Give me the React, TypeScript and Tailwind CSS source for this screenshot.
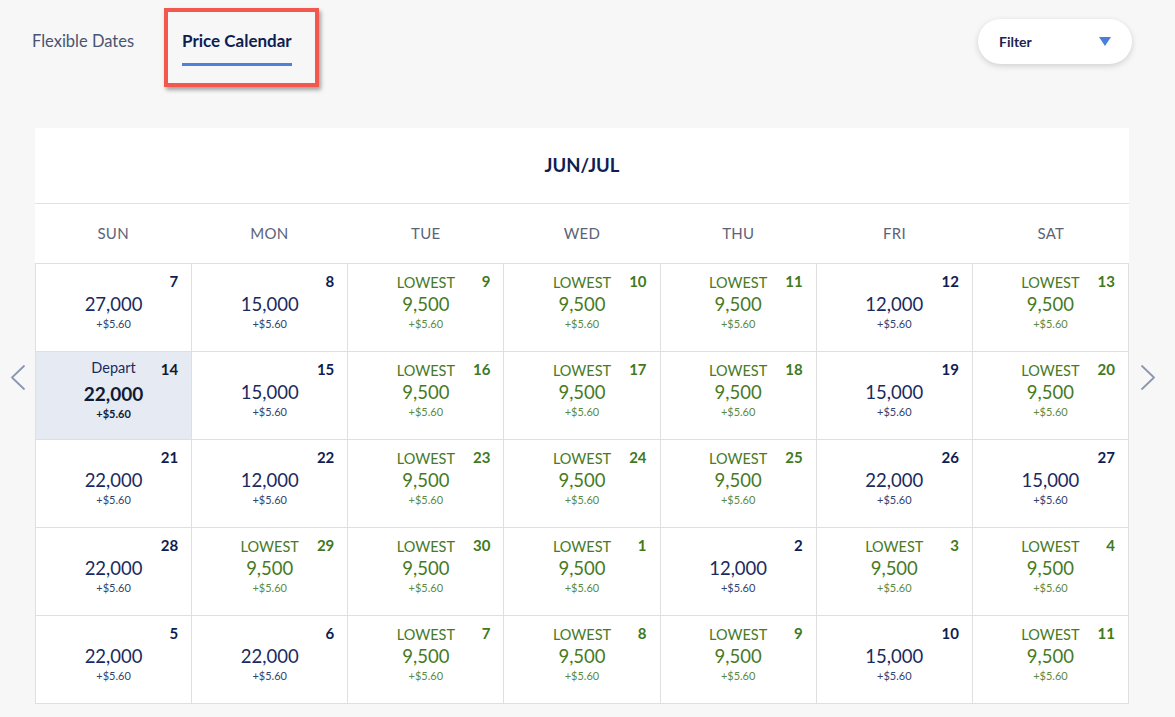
import React from "react";

type Cell = {
  day: number;
  price: string;
  lowest?: boolean;
  depart?: boolean;
};

const rows: Cell[][] = [
  [
    { day: 7, price: "27,000" },
    { day: 8, price: "15,000" },
    { day: 9, price: "9,500", lowest: true },
    { day: 10, price: "9,500", lowest: true },
    { day: 11, price: "9,500", lowest: true },
    { day: 12, price: "12,000" },
    { day: 13, price: "9,500", lowest: true },
  ],
  [
    { day: 14, price: "22,000", depart: true },
    { day: 15, price: "15,000" },
    { day: 16, price: "9,500", lowest: true },
    { day: 17, price: "9,500", lowest: true },
    { day: 18, price: "9,500", lowest: true },
    { day: 19, price: "15,000" },
    { day: 20, price: "9,500", lowest: true },
  ],
  [
    { day: 21, price: "22,000" },
    { day: 22, price: "12,000" },
    { day: 23, price: "9,500", lowest: true },
    { day: 24, price: "9,500", lowest: true },
    { day: 25, price: "9,500", lowest: true },
    { day: 26, price: "22,000" },
    { day: 27, price: "15,000" },
  ],
  [
    { day: 28, price: "22,000" },
    { day: 29, price: "9,500", lowest: true },
    { day: 30, price: "9,500", lowest: true },
    { day: 1, price: "9,500", lowest: true },
    { day: 2, price: "12,000" },
    { day: 3, price: "9,500", lowest: true },
    { day: 4, price: "9,500", lowest: true },
  ],
  [
    { day: 5, price: "22,000" },
    { day: 6, price: "22,000" },
    { day: 7, price: "9,500", lowest: true },
    { day: 8, price: "9,500", lowest: true },
    { day: 9, price: "9,500", lowest: true },
    { day: 10, price: "15,000" },
    { day: 11, price: "9,500", lowest: true },
  ],
];

const days = ["SUN", "MON", "TUE", "WED", "THU", "FRI", "SAT"];

function DayCell({ cell }: { cell: Cell }) {
  if (cell.depart) {
    return (
      <div className="relative h-[88px] border-r border-b border-[#dfdfdf] bg-[#e6eaf2] flex flex-col items-center pt-[7px]">
        <span className="absolute top-[8px] right-[13px] text-[15px] leading-[18px] font-bold text-[#111a33]">
          {cell.day}
        </span>
        <div className="text-[14.5px] leading-[17px] text-[#1b2a5e]">Depart</div>
        <div className="mt-[5px] text-[19px] leading-[26px] font-bold text-[#111a33]">
          {cell.price}
        </div>
        <div className="text-[11px] leading-[13px] font-bold text-[#111a33]">
          +$5.60
        </div>
      </div>
    );
  }
  const green = cell.lowest;
  return (
    <div className="relative h-[88px] border-r border-b border-[#dfdfdf] bg-white flex flex-col items-center pt-[10px]">
      <span
        className={`absolute top-[8px] right-[13px] text-[15px] leading-[18px] font-bold ${
          green ? "text-[#3f7a1e]" : "text-[#0f1d52]"
        }`}
      >
        {cell.day}
      </span>
      <div className="h-[17px] text-[14.5px] leading-[17px] text-[#467a26]">
        {green ? "LOWEST" : ""}
      </div>
      <div
        className={`text-[18.5px] leading-[26px] ${
          green ? "text-[#467a26]" : "text-[#1b2a5e]"
        }`}
      >
        {cell.price}
      </div>
      <div
        className={`text-[11px] leading-[13px] ${
          green ? "text-[#5d8a3c]" : "text-[#33436e]"
        }`}
      >
        +$5.60
      </div>
    </div>
  );
}

function Chevron({ dir }: { dir: "left" | "right" }) {
  return (
    <svg width="16" height="25" viewBox="0 0 16 25" fill="none">
      <polyline
        points={dir === "left" ? "14,1 2,12.5 14,24" : "2,1 14,12.5 2,24"}
        stroke="#8b97b1"
        strokeWidth="1.8"
        strokeLinecap="round"
        strokeLinejoin="round"
      />
    </svg>
  );
}

export default function App() {
  return (
    <div className="min-h-screen bg-[#f7f7f7] font-['Lato','Liberation_Sans',sans-serif]">
      <div className="h-[128px] flex items-start justify-between pl-[32px] pr-[43px]">
        <div className="flex items-start">
          <div className="w-[102px] pt-[31px] text-[16.5px] leading-[20px] text-[#4a5470] whitespace-nowrap">
            Flexible Dates
          </div>
          <div className="ml-[30px] mt-[8px] w-[155px] border-[4px] border-[#f2584b] pl-[14px] pt-[19px] pb-[17px] shadow-[2px_3px_4px_rgba(0,0,0,0.35)]">
            <div className="text-[17px] leading-[20px] font-bold text-[#0f1d52] whitespace-nowrap">
              Price Calendar
            </div>
            <div className="mt-[12px] w-[110px] h-[3px] bg-[#4f7fd9]"></div>
          </div>
        </div>
        <button className="mt-[19px] w-[154px] h-[45px] rounded-full bg-white shadow-[0_2px_6px_rgba(0,0,0,0.16)] flex items-center justify-between pl-[21px] pr-[21px]">
          <span className="text-[14px] font-bold text-[#1a2550]">Filter</span>
          <svg width="12" height="9" viewBox="0 0 12 9">
            <polygon points="0,0 12,0 6,9" fill="#4a7fd8" />
          </svg>
        </button>
      </div>

      <div className="flex items-start">
        <div className="w-[35px] flex justify-center pt-[237px]">
          <Chevron dir="left" />
        </div>
        <div className="w-[1094px] bg-white">
          <div className="h-[76px] flex items-center justify-center border-b border-[#e2e2e2] text-[18.5px] font-bold text-[#0f1d52]">
            JUN/JUL
          </div>
          <div className="grid grid-cols-7 h-[59px] items-center">
            {days.map((d) => (
              <div
                key={d}
                className="text-center text-[15px] tracking-[0.3px] text-[#5c6378]"
              >
                {d}
              </div>
            ))}
          </div>
          <div className="grid grid-cols-7 border-l border-t border-[#dfdfdf]">
            {rows.flat().map((c, i) => (
              <DayCell key={i} cell={c} />
            ))}
          </div>
        </div>
        <div className="w-[38px] flex justify-center pt-[237px]">
          <Chevron dir="right" />
        </div>
      </div>
    </div>
  );
}
